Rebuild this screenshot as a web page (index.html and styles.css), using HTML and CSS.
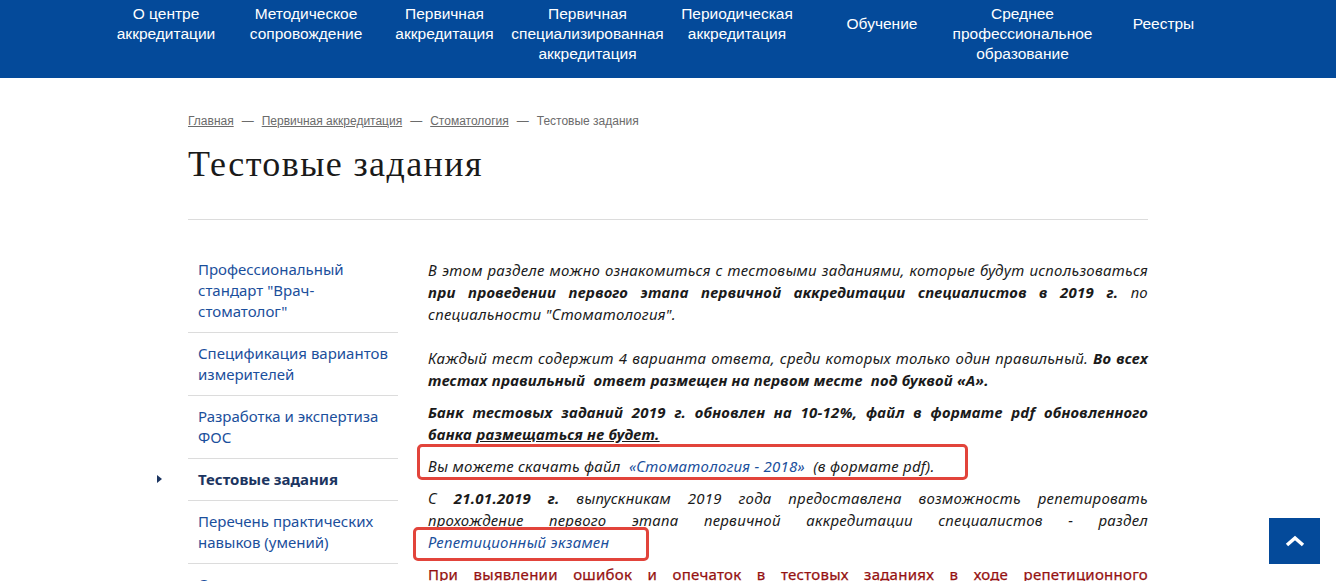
FILE: index.html
```html
<!DOCTYPE html>
<html lang="ru">
<head>
<meta charset="utf-8">
<title>Тестовые задания</title>
<link rel="stylesheet" href="styles.css">
</head>
<body>
<header class="topbar">
  <nav class="mainnav">
    <a class="nav-item" href="#">О центре<br>аккредитации</a>
    <a class="nav-item" href="#">Методическое<br>сопровождение</a>
    <a class="nav-item" href="#">Первичная<br>аккредитация</a>
    <a class="nav-item" href="#">Первичная<br>специализированная<br>аккредитация</a>
    <a class="nav-item" href="#">Периодическая<br>аккредитация</a>
    <a class="nav-item" href="#">Обучение</a>
    <a class="nav-item" href="#">Среднее<br>профессиональное<br>образование</a>
    <a class="nav-item" href="#">Реестры</a>
  </nav>
</header>

<main class="page">
  <div class="breadcrumbs">
    <a href="#">Главная</a><span class="sep">—</span><a href="#">Первичная аккредитация</a><span class="sep">—</span><a href="#">Стоматология</a><span class="sep">—</span><span class="current">Тестовые задания</span>
  </div>
  <h1 class="page-title">Тестовые задания</h1>
  <hr class="divider">

  <div class="columns">
    <aside class="sidemenu">
      <a class="side-item" href="#">Профессиональный стандарт "Врач-стоматолог"</a>
      <a class="side-item" href="#">Спецификация вариантов измерителей</a>
      <a class="side-item" href="#">Разработка и экспертиза ФОС</a>
      <a class="side-item active" href="#">Тестовые задания</a>
      <a class="side-item" href="#">Перечень практических навыков (умений)</a>
      <a class="side-item" href="#">Ситуационные задачи</a>
    </aside>

    <article class="content">
      <p class="p-first"><i>В этом разделе можно ознакомиться с тестовыми заданиями, которые будут использоваться <b>при проведении первого этапа первичной аккредитации специалистов в 2019 г.</b> по специальности "Стоматология".</i></p>
      <p class="p-empty">&nbsp;</p>
      <p><i>Каждый тест содержит 4 варианта ответа, среди которых только один правильный. <b>Во всех тестах правильный&nbsp; ответ размещен на первом месте&nbsp; под буквой «А».</b></i></p>
      <p><b><i>Банк тестовых заданий 2019 г. обновлен на 10-12%, файл в формате pdf обновленного <span class="nw">банка <u>размещаться не будет.</u></span></i></b></p>
      <p class="boxed boxed-one"><i>Вы можете скачать файл&nbsp; <a href="#">«Стоматология - 2018»</a>&nbsp; (в формате pdf).</i></p>
      <p class="boxed boxed-two"><i>С <b>21.01.2019 г.</b> выпускникам 2019 года предоставлена возможность репетировать <span class="nw">прохождение первого</span> этапа первичной аккредитации специалистов - раздел <a class="nw" href="#">Репетиционный экзамен</a></i></p>
      <p class="warn">При выявлении ошибок и опечаток в тестовых заданиях в ходе репетиционного <span class="nw">экзамена просим</span> сообщать об этом через форму обратной связи.</p>
    </article>
  </div>
</main>

<a class="to-top" href="#" aria-label="Наверх">
  <svg width="20" height="12" viewBox="0 0 20 12"><path d="M2 10 L10 3 L18 10" fill="none" stroke="#fff" stroke-width="3.5" stroke-linejoin="miter"/></svg>
</a>
</body>
</html>
```

FILE: styles.css
```css
*, *::before, *::after { box-sizing: border-box; }
html, body { margin: 0; padding: 0; }
body {
  font-family: "Noto Sans", "Open Sans", sans-serif;
  color: #1b1b1b;
  background: #fff;
}
a { color: inherit; }

.topbar {
  background: #044a9a;
  height: 78px;
  padding-top: 4px;
}
.mainnav {
  display: grid;
  grid-template-columns: 140px 140px 137px 149px 150px 140px 141px 141px;
  justify-content: center;
  margin-left: -6px;
}
.nav-item {
  display: flex;
  align-items: center;
  justify-content: center;
  min-height: 40px;
  align-self: start;
  text-align: center;
  color: #fff;
  text-decoration: none;
  font-family: "Liberation Sans", Arial, sans-serif;
  font-size: 15.5px;
  line-height: 20px;
  white-space: nowrap;
}

.page {
  width: 960px;
  margin: 0 auto;
  padding-top: 35px;
}
.breadcrumbs {
  font-family: "Liberation Sans", Arial, sans-serif;
  font-size: 12px;
  line-height: 16px;
  color: #6b6b6b;
}
.breadcrumbs a { color: #6b6b6b; }
.breadcrumbs .sep { margin: 0 8px; }

.page-title {
  margin: 13px 0 0;
  font-family: "Liberation Serif", "DejaVu Serif", serif;
  font-weight: normal;
  font-size: 36px;
  line-height: 44px;
  letter-spacing: 1.4px;
  color: #1a1a1a;
}
.divider {
  border: 0;
  border-top: 1px solid #dcdcdc;
  margin: 33px 0 0;
}

.columns {
  display: flex;
  gap: 30px;
  padding-top: 29px;
}
.sidemenu {
  width: 210px;
  flex: none;
  display: flex;
  flex-direction: column;
}
.side-item {
  position: relative;
  display: block;
  padding: 10px;
  border-bottom: 1px solid #dcdcdc;
  font-size: 15px;
  line-height: 21px;
  color: #1b4f9c;
  text-decoration: none;
}
.side-item.active {
  font-weight: bold;
  color: #1c3561;
}
.side-item.active::before {
  content: "";
  position: absolute;
  left: -31px;
  top: 16px;
  border-left: 5px solid #1c3561;
  border-top: 4px solid transparent;
  border-bottom: 4px solid transparent;
}

.content {
  width: 720px;
  flex: none;
  font-size: 15px;
  line-height: 22px;
  letter-spacing: 0.25px;
  text-align: justify;
  padding-top: 10px;
}
.content p { margin: 0 0 10px; position: relative; }
.content p.p-first { margin-bottom: 0; }
.content p.p-empty { margin-bottom: 0; }
.content a { color: #1b4f9c; text-decoration: none; }
.content .nw { white-space: nowrap; }

.boxed::after {
  content: "";
  position: absolute;
  border: 3px solid #e2443b;
  border-radius: 5px;
}
.boxed-one::after { left: -11px; top: -11px; width: 551px; height: 36px; }
.boxed-two::after { left: -15px; top: 40px; width: 236px; height: 34px; }

.warn {
  color: #951111;
  -webkit-text-stroke: 0.25px #951111;
}

.to-top {
  position: fixed;
  right: 16px;
  bottom: 17px;
  width: 51px;
  height: 46px;
  background: #044a9a;
  display: flex;
  align-items: center;
  justify-content: center;
}
```
